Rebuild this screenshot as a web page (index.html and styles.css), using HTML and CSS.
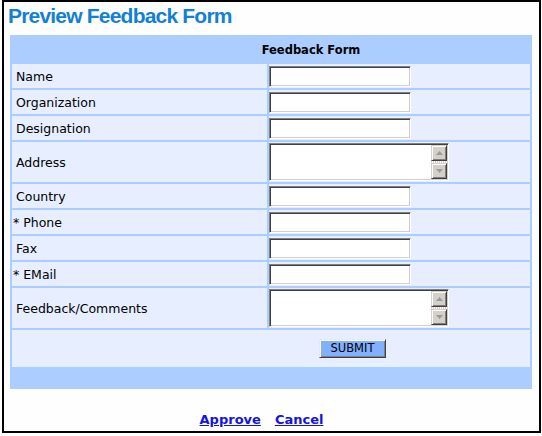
FILE: index.html
```html
<!DOCTYPE html>
<html>
<head>
<meta charset="utf-8">
<title>Preview Feedback Form</title>
<link rel="stylesheet" href="styles.css">
</head>
<body>
<div class="frame">
  <h1 class="title">Preview Feedback Form</h1>
  <table class="form">
    <tr><th colspan="2" class="head">Feedback Form</th></tr>
    <tr><td class="label">Name</td><td class="field"><input class="text" type="text"></td></tr>
    <tr><td class="label">Organization</td><td class="field"><input class="text" type="text"></td></tr>
    <tr><td class="label">Designation</td><td class="field"><input class="text" type="text"></td></tr>
    <tr class="tall"><td class="label">Address</td><td class="field">
      <div class="area"><textarea></textarea><div class="sb">
        <div class="sbtn"><svg width="7" height="4" viewBox="0 0 7 4"><polygon points="0,4 7,4 3.5,0" fill="#9a9a9a"/></svg></div>
        <div class="track"></div>
        <div class="sbtn"><svg width="7" height="4" viewBox="0 0 7 4"><polygon points="0,0 7,0 3.5,4" fill="#9a9a9a"/></svg></div>
      </div></div>
    </td></tr>
    <tr><td class="label">Country</td><td class="field"><input class="text" type="text"></td></tr>
    <tr><td class="label req">* Phone</td><td class="field"><input class="text" type="text"></td></tr>
    <tr><td class="label">Fax</td><td class="field"><input class="text" type="text"></td></tr>
    <tr><td class="label req">* EMail</td><td class="field"><input class="text" type="text"></td></tr>
    <tr class="tall"><td class="label">Feedback/Comments</td><td class="field">
      <div class="area"><textarea></textarea><div class="sb">
        <div class="sbtn"><svg width="7" height="4" viewBox="0 0 7 4"><polygon points="0,4 7,4 3.5,0" fill="#9a9a9a"/></svg></div>
        <div class="track"></div>
        <div class="sbtn"><svg width="7" height="4" viewBox="0 0 7 4"><polygon points="0,0 7,0 3.5,4" fill="#9a9a9a"/></svg></div>
      </div></div>
    </td></tr>
    <tr><td colspan="2" class="submit-cell"><button class="submit" type="button">SUBMIT</button></td></tr>
    <tr><td colspan="2" class="foot"></td></tr>
  </table>
  <div class="actions"><a href="#" class="link">Approve</a><a href="#" class="link">Cancel</a></div>
</div>
</body>
</html>
```
FILE: styles.css
```css
html, body {
  margin: 0;
  padding: 0;
  background: #fefefe;
}
.frame {
  box-sizing: border-box;
  margin-left: 2px;
  width: 539px;
  height: 433px;
  border: 2px solid #000;
}
.title {
  margin: 1px 0 6px 0;
  padding-left: 4px;
  font-family: "Liberation Sans", Arial, sans-serif;
  font-weight: bold;
  font-size: 21px;
  letter-spacing: -0.8px;
  line-height: 26px;
  color: #1280d4;
}
.form {
  margin-left: 6px;
  width: 522px;
  border-collapse: separate;
  border-spacing: 2px;
  background: #abcdff;
  font-family: "DejaVu Sans", Verdana, sans-serif;
  color: #000;
}
.head {
  height: 25px;
  padding: 0 0 0 80px;
  text-align: center;
  font-size: 11.5px;
  font-weight: bold;
  vertical-align: middle;
}
.label {
  width: 251px;
  height: 24px;
  padding: 0 0 0 4px;
  background: #e6eeff;
  font-size: 12.5px;
  vertical-align: middle;
}
.label.req {
  padding-left: 1px;
  width: 254px;
}
.tall .label {
  height: 40px;
}
.field {
  width: 261px;
  padding: 0;
  background: #e6eeff;
  vertical-align: middle;
  line-height: 0;
}
.text {
  box-sizing: border-box;
  width: 142px;
  height: 21px;
  margin: 0;
  padding: 0 2px;
  border: 1px solid;
  border-color: #808080 #ffffff #ffffff #808080;
  box-shadow: inset 1px 1px 0 #404040, inset -1px -1px 0 #d4d0c8;
  background: #fff;
  outline: none;
}
.area {
  box-sizing: border-box;
  display: inline-flex;
  width: 180px;
  height: 38px;
  border: 1px solid;
  border-color: #808080 #ffffff #ffffff #808080;
  background: #fff;
  box-shadow: inset 1px 1px 0 #404040, inset -1px -1px 0 #d4d0c8;
  padding: 1px;
}
.area textarea {
  flex: 1;
  border: 0;
  margin: 0;
  padding: 0;
  resize: none;
  outline: none;
  background: transparent;
  overflow: hidden;
}
.sb {
  width: 16px;
  display: flex;
  flex-direction: column;
}
.sbtn {
  box-sizing: border-box;
  height: 16px;
  background: #d4d0c8;
  border: 1px solid;
  border-color: #d4d0c8 #404040 #404040 #d4d0c8;
  box-shadow: inset 1px 1px 0 #ffffff, inset -1px -1px 0 #808080;
  display: flex;
  align-items: center;
  justify-content: center;
}
.track {
  flex: 1;
  background-color: #f0efea;
  background-image: repeating-linear-gradient(90deg, #d4d0c8 0 1px, #ffffff 1px 2px);
}
.submit-cell {
  height: 37px;
  padding: 0 0 0 307px;
  background: #e6eeff;
  vertical-align: middle;
  line-height: 0;
}
.submit {
  box-sizing: border-box;
  width: 67px;
  height: 19px;
  margin: 0;
  padding: 0;
  background: #80b0ff;
  border: 1px solid;
  border-color: #e8e8e8 #404040 #404040 #e8e8e8;
  box-shadow: inset 1px 1px 0 #ffffff, inset -1px -1px 0 #808080;
  font-family: "DejaVu Sans", Verdana, sans-serif;
  font-size: 11.5px;
  line-height: 15px;
  color: #000;
}
.foot {
  height: 18px;
  padding: 0;
}
.actions {
  margin-top: 23px;
  padding-right: 20px;
  text-align: center;
  font-family: "DejaVu Sans", Verdana, sans-serif;
  font-weight: bold;
  font-size: 13px;
  line-height: 16px;
}
.link {
  color: #1414e0;
  text-decoration: underline;
  margin: 0 7px;
}
```
